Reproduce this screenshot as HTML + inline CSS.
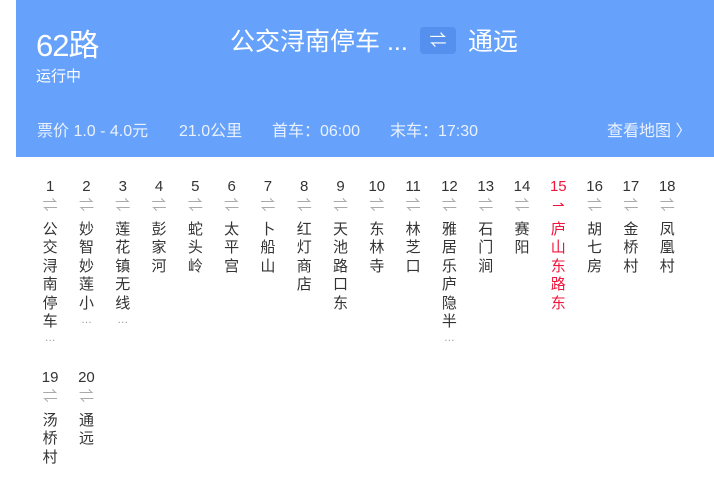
<!DOCTYPE html>
<html><head><meta charset="utf-8"><style>
body{margin:0;width:714px;height:483px;background:#fff;font-family:"Liberation Sans","Noto Sans CJK SC",sans-serif;overflow:hidden;position:relative}
.hd{position:absolute;left:16px;top:0;width:698px;height:157px;background:#66a1fb;color:#fff}
.t{position:absolute;left:20px;top:20px;font-size:31px;letter-spacing:-1px}
.s{position:absolute;left:20px;top:65px;font-size:15px}
.dir{position:absolute;left:214px;top:22px;font-size:25px;white-space:nowrap}
.sw{position:absolute;left:404px;top:27px;width:36px;height:27px;background:#5590ef;border-radius:4px;font-size:17px;text-align:center;line-height:27px}
.to{position:absolute;left:452px;top:22px;font-size:25px}
.info{position:absolute;top:117px;font-size:16px;color:#eaf2ff;white-space:nowrap}
.c{width:36.3px;text-align:center;color:#333}
.n{font-size:15px;height:20px;line-height:20px}
.a{color:#aaa;font-size:15px;height:20px;line-height:18px}
.x{font-size:15px;line-height:18.4px;margin-top:4px}
.e{color:#999;font-size:11px;line-height:14px}
.r{color:#f0143c}
.r .a{color:#f0143c}
.row{position:absolute;left:32px;display:flex}
</style></head><body>
<div class="hd">
<div class="t">62路</div><div class="s">运行中</div>
<div class="dir">公交浔南停车 ...</div><div class="sw">⇌</div><div class="to">通远</div>
<div class="info" style="left:21px">票价 1.0 - 4.0元</div>
<div class="info" style="left:163px">21.0公里</div>
<div class="info" style="left:256px">首车：06:00</div>
<div class="info" style="left:374px">末车：17:30</div>
<div class="info" style="left:591px">查看地图 〉</div>
</div>
<div class="row" style="top:177px">
<div class="c"><div class="n">1</div><div class="a">⇌</div><div class="x">公<br>交<br>浔<br>南<br>停<br>车</div><div class="e">…</div></div>
<div class="c"><div class="n">2</div><div class="a">⇌</div><div class="x">妙<br>智<br>妙<br>莲<br>小</div><div class="e">…</div></div>
<div class="c"><div class="n">3</div><div class="a">⇌</div><div class="x">莲<br>花<br>镇<br>无<br>线</div><div class="e">…</div></div>
<div class="c"><div class="n">4</div><div class="a">⇌</div><div class="x">彭<br>家<br>河</div></div>
<div class="c"><div class="n">5</div><div class="a">⇌</div><div class="x">蛇<br>头<br>岭</div></div>
<div class="c"><div class="n">6</div><div class="a">⇌</div><div class="x">太<br>平<br>宫</div></div>
<div class="c"><div class="n">7</div><div class="a">⇌</div><div class="x">卜<br>船<br>山</div></div>
<div class="c"><div class="n">8</div><div class="a">⇌</div><div class="x">红<br>灯<br>商<br>店</div></div>
<div class="c"><div class="n">9</div><div class="a">⇌</div><div class="x">天<br>池<br>路<br>口<br>东</div></div>
<div class="c"><div class="n">10</div><div class="a">⇌</div><div class="x">东<br>林<br>寺</div></div>
<div class="c"><div class="n">11</div><div class="a">⇌</div><div class="x">林<br>芝<br>口</div></div>
<div class="c"><div class="n">12</div><div class="a">⇌</div><div class="x">雅<br>居<br>乐<br>庐<br>隐<br>半</div><div class="e">…</div></div>
<div class="c"><div class="n">13</div><div class="a">⇌</div><div class="x">石<br>门<br>涧</div></div>
<div class="c"><div class="n">14</div><div class="a">⇌</div><div class="x">赛<br>阳</div></div>
<div class="c r"><div class="n">15</div><div class="a">⇀</div><div class="x">庐<br>山<br>东<br>路<br>东</div></div>
<div class="c"><div class="n">16</div><div class="a">⇌</div><div class="x">胡<br>七<br>房</div></div>
<div class="c"><div class="n">17</div><div class="a">⇌</div><div class="x">金<br>桥<br>村</div></div>
<div class="c"><div class="n">18</div><div class="a">⇌</div><div class="x">凤<br>凰<br>村</div></div>
</div>
<div class="row" style="top:368px">
<div class="c"><div class="n">19</div><div class="a">⇌</div><div class="x">汤<br>桥<br>村</div></div>
<div class="c"><div class="n">20</div><div class="a">⇌</div><div class="x">通<br>远</div></div>
</div>
</body></html>
